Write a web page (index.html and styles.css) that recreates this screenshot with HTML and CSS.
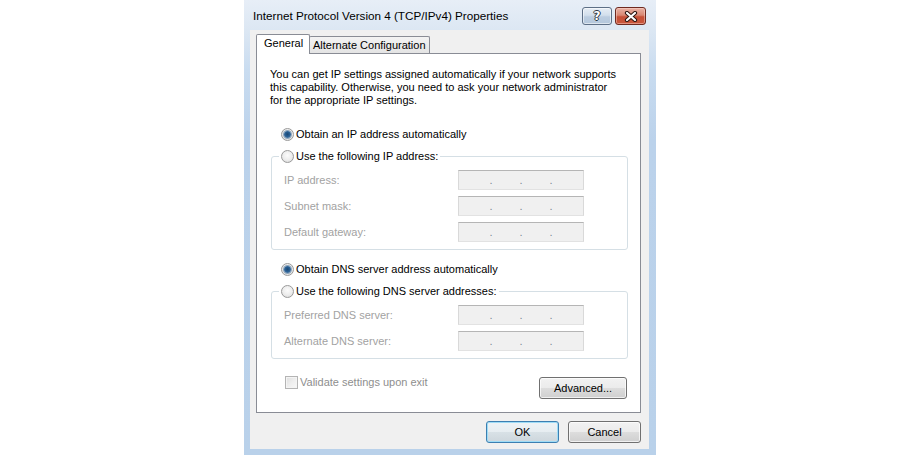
FILE: index.html
```html
<!DOCTYPE html>
<html lang="en">
<head>
<meta charset="utf-8">
<title>Internet Protocol Version 4 (TCP/IPv4) Properties</title>
<link rel="stylesheet" href="styles.css">
</head>
<body>
<div class="window">
  <div class="titlebar">
    <div class="title">Internet Protocol Version 4 (TCP/IPv4) Properties</div>
    <div class="caption-buttons">
      <div class="cbtn help"><span class="qmark">?</span></div>
      <div class="cbtn close">
        <svg width="14" height="11" viewBox="0 0 14 11">
          <path d="M3 2 L11 9 M11 2 L3 9" stroke="#2a1410" stroke-width="4.2" stroke-linecap="round" fill="none"/>
          <path d="M3 2 L11 9 M11 2 L3 9" stroke="#ffffff" stroke-width="2.2" stroke-linecap="round" fill="none"/>
        </svg>
      </div>
    </div>
  </div>
  <div class="client">
    <div class="tabs">
      <div class="tab active">General</div>
      <div class="tab">Alternate Configuration</div>
    </div>
    <div class="panel">
      <p class="intro">You can get IP settings assigned automatically if your network supports<br>this capability. Otherwise, you need to ask your network administrator<br>for the appropriate IP settings.</p>

      <div class="opt first"><span class="radio checked"></span><span>Obtain an IP address automatically</span></div>
      <fieldset class="group">
        <legend><span class="opt-in"><span class="radio"></span><span>Use the following IP address:</span></span></legend>
        <div class="rows">
          <span class="lbl">IP address:</span>
          <span class="ip"><span>.</span><span>.</span><span>.</span></span>
          <span class="lbl">Subnet mask:</span>
          <span class="ip"><span>.</span><span>.</span><span>.</span></span>
          <span class="lbl">Default gateway:</span>
          <span class="ip"><span>.</span><span>.</span><span>.</span></span>
        </div>
      </fieldset>

      <div class="opt second"><span class="radio checked"></span><span>Obtain DNS server address automatically</span></div>
      <fieldset class="group">
        <legend><span class="opt-in"><span class="radio"></span><span>Use the following DNS server addresses:</span></span></legend>
        <div class="rows">
          <span class="lbl">Preferred DNS server:</span>
          <span class="ip"><span>.</span><span>.</span><span>.</span></span>
          <span class="lbl">Alternate DNS server:</span>
          <span class="ip"><span>.</span><span>.</span><span>.</span></span>
        </div>
      </fieldset>

      <div class="checkrow">
        <div class="chk-wrap"><span class="chk"></span><span>Validate settings upon exit</span></div>
        <button class="btn advanced" type="button">Advanced...</button>
      </div>
    </div>
    <div class="footer">
      <button class="btn default" type="button">OK</button>
      <button class="btn" type="button">Cancel</button>
    </div>
  </div>
</div>
</body>
</html>
```
FILE: styles.css
```css
* { box-sizing: border-box; }
html, body { margin: 0; padding: 0; background: #ffffff; }
body {
  display: flex;
  justify-content: center;
  font-family: "Liberation Sans", Arial, sans-serif;
  font-size: 11px;
  color: #000;
}
.window {
  width: 412px;
  height: 455px;
  display: flex;
  flex-direction: column;
  padding: 0 7px 6px 6px;
  background: linear-gradient(#e7eef7 0px, #dce7f3 30px, #c9dcf0 70px, #bbd2eb 140px, #b9d1ea 100%);
}
.titlebar {
  height: 30px;
  flex: none;
  display: flex;
  justify-content: space-between;
  align-items: flex-start;
  padding: 7px 3px 0 3px;
}
.title {
  font-size: 11.7px;
  line-height: 18px;
  color: #000;
}
.caption-buttons { display: flex; gap: 3px; }
.cbtn {
  height: 18px;
  border-radius: 3px;
  display: flex;
  align-items: center;
  justify-content: center;
}
.help {
  width: 30px;
  border: 1px solid #5d6f86;
  background: linear-gradient(#e6edf5 0%, #d3dfec 45%, #bccde0 55%, #b4c7dc 100%);
  box-shadow: inset 0 0 0 1px rgba(255,255,255,0.55);
}
.qmark {
  font-family: "DejaVu Sans", sans-serif;
  font-weight: bold;
  font-size: 12px;
  line-height: 14px;
  color: #fff;
  text-shadow: 1px 0 0 #2b3440, -1px 0 0 #2b3440, 0 1px 0 #2b3440, 0 -1px 0 #2b3440;
}
.close {
  width: 31px;
  border: 1px solid #6e2a20;
  background: linear-gradient(#e9b3a6 0%, #d98773 45%, #c65038 55%, #c9573c 100%);
  box-shadow: inset 0 0 0 1px rgba(255,220,210,0.45);
}
.client {
  flex: 1;
  background: #f0f0f0;
  display: flex;
  flex-direction: column;
  padding: 4px 8px 0 6px;
}
.tabs {
  display: flex;
  align-items: flex-end;
  height: 20px;
  margin-bottom: -1px;
  position: relative;
  z-index: 1;
}
.tab {
  height: 17px;
  margin-bottom: 1px;
  border: 1px solid #898c95;
  border-bottom: none;
  border-radius: 2px 2px 0 0;
  background: linear-gradient(#f3f3f3, #e4e4e4);
  line-height: 16px;
  padding-left: 3px;
  width: 121px;
  margin-left: -1px;
}
.tab.active {
  height: 20px;
  margin-bottom: 0;
  margin-left: 0;
  width: 54px;
  background: #fff;
  padding-left: 7px;
  line-height: 17px;
  position: relative;
  z-index: 2;
}
.panel {
  height: 360px;
  border: 1px solid #898c95;
  background: #fff;
  padding-top: 14px;
  display: flex;
  flex-direction: column;
}
.intro {
  margin: 0 0 0 13px;
  line-height: 13px;
}
.opt, .opt-in {
  display: flex;
  align-items: center;
  gap: 2px;
  line-height: 14px;
}
.opt { margin-left: 24px; }
.opt.first { margin-top: 20px; }
.opt.second { margin-top: 12px; }
.radio {
  width: 13px;
  height: 13px;
  flex: none;
  border-radius: 50%;
  border: 1px solid #9a9a9a;
  background: radial-gradient(circle at 50% 40%, #fbfbfb 0%, #ececec 55%, #d4d4d4 100%);
  display: flex;
  align-items: center;
  justify-content: center;
}
.radio.checked::after {
  content: "";
  width: 7px;
  height: 7px;
  border-radius: 50%;
  background: radial-gradient(circle at 50% 45%, #1b4670 0%, #285f94 45%, #6a8fb2 100%);
  box-shadow: 0 0 0 1px #8ea5bb;
}
.group {
  margin: 8px 0 0 14px;
  width: 357px;
  min-width: 0;
  border: 1px solid #d5dfe5;
  border-radius: 3px;
  padding: 0 0 7px 12px;
}
.group legend {
  margin-left: -5px;
  padding: 0 2px;
  line-height: 14px;
}
.rows {
  display: grid;
  grid-template-columns: 174px 126px;
  row-gap: 6px;
  margin-top: 7px;
  align-items: center;
}
.lbl { color: #a2a2a2; }
.ip {
  height: 20px;
  border: 1px solid;
  border-color: #b5b5b5 #d9d9d9 #e2e2e2 #d9d9d9;
  background: #f0f0f0;
  display: flex;
  padding-left: 17px;
  line-height: 18px;
  color: #7c8894;
}
.ip span { width: 30px; text-align: center; }
.checkrow {
  display: flex;
  justify-content: space-between;
  align-items: flex-start;
  margin: 17px 13px 0 28px;
}
.chk-wrap {
  display: flex;
  align-items: center;
  gap: 2px;
  line-height: 13px;
  color: #8e8e8e;
}
.chk {
  width: 13px;
  height: 13px;
  flex: none;
  border: 1px solid #b4b4b4;
  background: linear-gradient(135deg, #dedede 0%, #eeeeee 50%, #f8f8f8 100%);
  box-shadow: inset 0 0 0 1px #f4f4f4;
}
.btn {
  width: 73px;
  height: 22px;
  padding: 0;
  margin: 0;
  font: inherit;
  color: #000;
  border: 1px solid #707070;
  border-radius: 3px;
  background: linear-gradient(#f2f2f2 0%, #ebebeb 50%, #dddddd 51%, #cfcfcf 100%);
  box-shadow: inset 0 0 0 1px rgba(255,255,255,0.7);
}
.btn.advanced { width: 88px; margin-top: 1px; }
.btn.default {
  border-color: #3c7fb1;
  background: linear-gradient(#eef3f6 0%, #e6edf1 50%, #d8e1e6 51%, #cdd6dc 100%);
  box-shadow: inset 0 0 0 1px #9fdcf6;
}
.footer {
  display: flex;
  justify-content: flex-end;
  gap: 9px;
  margin-top: 8px;
}
```
